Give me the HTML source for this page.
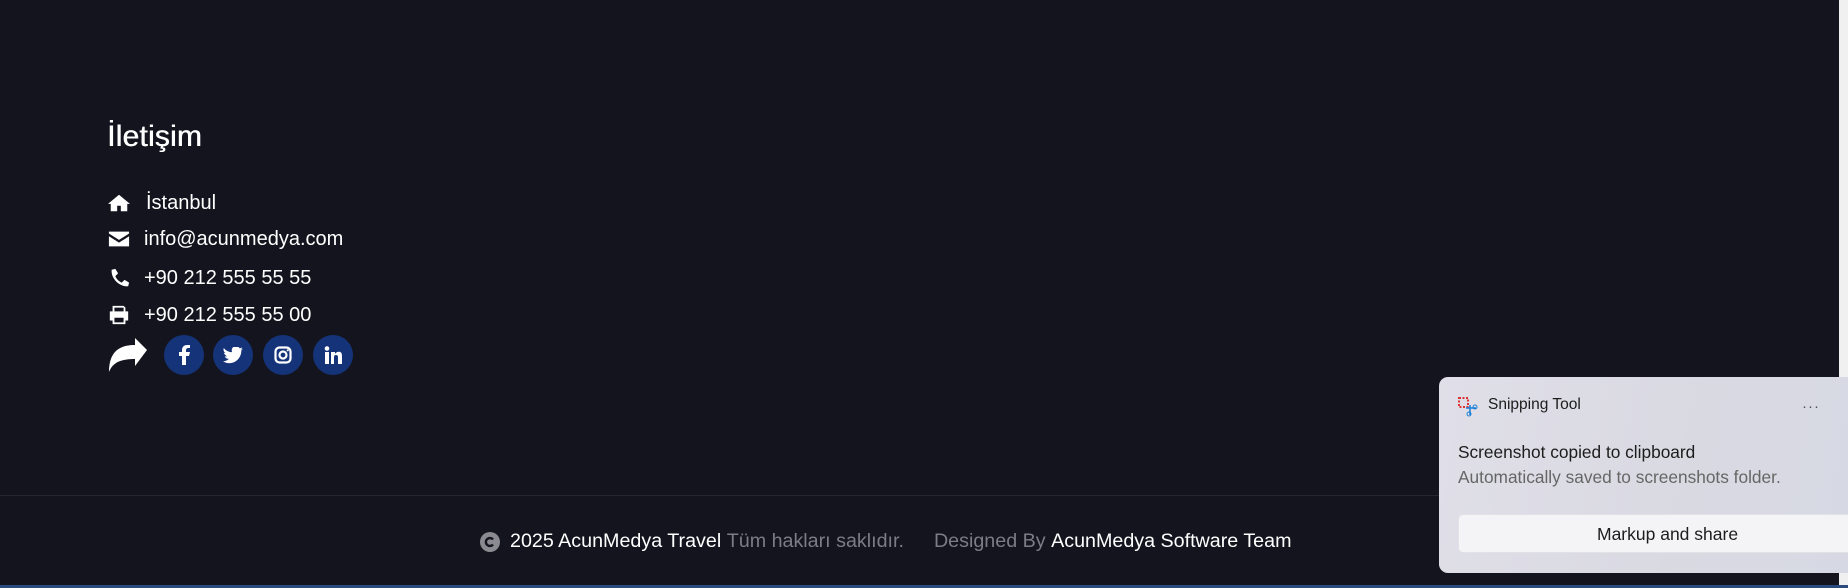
<!DOCTYPE html>
<html><head><meta charset="utf-8"><style>
*{margin:0;padding:0;box-sizing:border-box}
body{width:1848px;height:588px;background:#14141f;position:relative;overflow:hidden;font-family:"Liberation Sans",sans-serif;color:#fff}
.a{position:absolute}
h2{position:absolute;left:107px;top:120px;font-size:30px;font-weight:normal;letter-spacing:0.2px;text-shadow:0.5px 0 0 #fff}
.row{position:absolute;left:108px;font-size:20px;display:flex;align-items:center;height:24px}
.row svg{width:22px;height:20px;margin-right:14px;fill:#fff}
.soc{position:absolute;top:335px;width:40px;height:40px;border-radius:50%;background:#143378;display:flex;align-items:center;justify-content:center}
.soc svg{fill:#fff}
.line{position:absolute;left:0;top:495px;width:1839px;height:1px;background:#262633}
.foot{position:absolute;top:530px;left:480px;font-size:19.7px;display:flex;align-items:center;white-space:nowrap}
.g{color:#7c7c85}
.toast{position:absolute;left:1439px;top:377px;width:420px;height:196px;border-radius:9px;background:linear-gradient(100deg,#e0dfe8,#d9d9e2 60%,#d6d9e4);color:#1c1c1c}
</style></head><body>
<div class="a" style="left:1839px;top:0;width:9px;height:588px;background:#f0f0f0"></div>
<h2>İletişim</h2>
<div class="row" style="top:191px"><svg viewBox="0 0 24 20"><path d="M12 1L0 11h3v8h7v-6h4v6h7v-8h3L12 1z"/></svg><span style="margin-left:2px">İstanbul</span></div>
<div class="row" style="top:227px"><svg viewBox="0 0 24 20"><path d="M1 2h22v2l-11 7L1 4z M1 7l11 7 11-7v11H1z"/></svg>info@acunmedya.com</div>
<div class="row" style="top:266px"><svg viewBox="0 0 24 20"><path d="M4 1l4-1 3 5-3 3c1 3 4 6 7 7l3-3 5 3-1 4C13 20 3 11 4 1z"/></svg>+90 212 555 55 55</div>
<div class="row" style="top:303px"><svg viewBox="0 0 24 20"><path d="M5 0h12l2 2v4h3v10h-3v4H5v-4H2V6h3z M7 2v4h10V2z M7 13v5h10v-5z"/></svg>+90 212 555 55 00</div>
<svg class="a" style="left:107px;top:337px" width="42" height="36" viewBox="0 0 42 36"><path d="M40 13L28 1v7C12 8 2 15 2 35c4-10 12-13 26-13v7z" fill="#fff"/></svg>
<div class="soc" style="left:164px"><svg width="12" height="20" viewBox="0 0 12 20"><path d="M8 20V11h3l1-4H8V5c0-1 1-2 2-2h2V0H9C6 0 4 2 4 5v2H1v4h3v9z"/></svg></div>
<div class="soc" style="left:213px"><svg width="20" height="17" viewBox="0 0 24 20"><path d="M24 2c-1 .5-2 .8-3 1 1-.6 2-1.600 2-2.7-1 .6-2 1-3 1.2A5 5 0 0 0 11 6C7 6 3 4 1 1c-1 2 0 5 2 6-1 0-2 0-2-1 0 2 2 4 4 5H2c1 2 3 3 5 3-2 2-5 3-7 3 10 6 22-1 22-13l2-2z"/></svg></div>
<div class="soc" style="left:263px"><svg width="18" height="18" viewBox="0 0 18 18"><rect x="1.5" y="1.5" width="15" height="15" rx="4" fill="none" stroke="#fff" stroke-width="2.2"/><circle cx="9" cy="9" r="3.5" fill="none" stroke="#fff" stroke-width="2.2"/><circle cx="13.7" cy="4.3" r="1.1"/></svg></div>
<div class="soc" style="left:313px"><svg width="18" height="18" viewBox="0 0 18 18"><rect x="1" y="6" width="4" height="12"/><circle cx="3" cy="2.5" r="2.3"/><path d="M7 6h4v2c1-2 3-2.3 4-2.3 3 0 3 3 3 5V18h-4v-6c0-1.5 0-3-2-3s-2 1.5-2 3v6H7z"/></svg></div>
<div class="line"></div>
<div class="foot"><svg width="20" height="20" viewBox="0 0 20 20" style="margin-right:10px"><circle cx="10" cy="10" r="10" fill="#8a8a90"/><path d="M13 7.5a4 4 0 1 0 0 5" stroke="#14141f" stroke-width="2.4" fill="none"/></svg><span>2025 AcunMedya Travel</span>&nbsp;<span class="g">Tüm hakları saklıdır.</span><span class="g" style="margin-left:30px">Designed By</span>&nbsp;<span>AcunMedya Software Team</span></div>
<div class="a" style="left:0;top:585px;width:1848px;height:3px;background:#2b4a7e"></div>
<div class="toast">
<svg class="a" style="left:19px;top:20px" width="20" height="20" viewBox="0 0 20 20"><rect x="1" y="1" width="9" height="9" fill="none" stroke="#d33" stroke-width="2" stroke-dasharray="2 1.5"/><path d="M8 11h10M12 8v10" stroke="#1a7fd4" stroke-width="1.5"/><circle cx="17" cy="10" r="2" fill="none" stroke="#1a7fd4"/><circle cx="11" cy="17" r="2" fill="none" stroke="#1a7fd4"/></svg>
<div class="a" style="left:49px;top:19px;font-size:15.5px">Snipping Tool</div>
<div class="a" style="left:363px;top:21px;font-size:15px;color:#555;letter-spacing:1px">···</div>
<div class="a" style="left:19px;top:65px;font-size:17.3px">Screenshot copied to clipboard</div>
<div class="a" style="left:19px;top:90px;font-size:17.3px;color:#666">Automatically saved to screenshots folder.</div>
<div class="a" style="left:19px;top:137px;width:420px;height:39px;background:#f4f4f6;border-radius:5px;border:1px solid #e2e2e6"></div>
<div class="a" style="left:158px;top:147px;font-size:17.5px">Markup and share</div>
</div>
</body></html>
